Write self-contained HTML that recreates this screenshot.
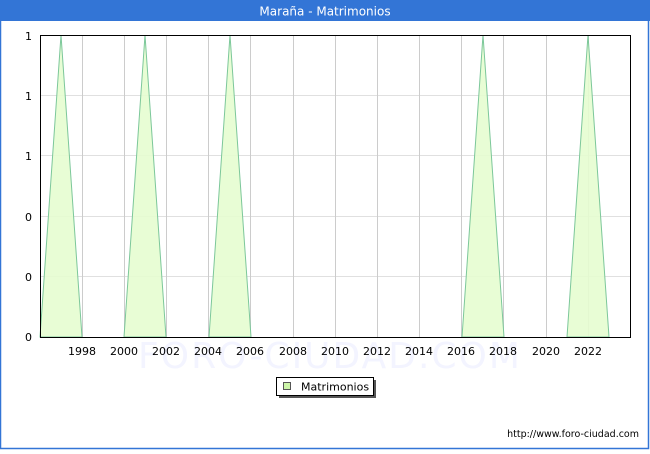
<!DOCTYPE html>
<html><head><meta charset="utf-8"><style>
html,body{margin:0;padding:0;background:#fff}
body{width:650px;height:450px;overflow:hidden;font-family:"DejaVu Sans","Liberation Sans",sans-serif}
</style></head><body>
<svg width="650" height="450" xmlns="http://www.w3.org/2000/svg" font-family="DejaVu Sans, Liberation Sans, sans-serif">
<rect x="0" y="0" width="650" height="450" fill="#fff"/>
<rect x="0.5" y="0.5" width="648" height="448" fill="none" stroke="#3375d6" stroke-width="1.5"/>
<rect x="0" y="0" width="650" height="21" fill="#3375d6"/>
<text x="325" y="15.5" fill="#fff" font-size="12" text-anchor="middle">Maraña - Matrimonios</text>
<text x="330" y="368" fill="#f3f4ff" font-size="36" text-anchor="middle" letter-spacing="2">FORO-CIUDAD.COM</text>
<g stroke="#e0e0e0" stroke-width="1">
<line x1="40" y1="95.5" x2="630" y2="95.5"/><line x1="40" y1="155.5" x2="630" y2="155.5"/>
<line x1="40" y1="216.5" x2="630" y2="216.5"/><line x1="40" y1="276.5" x2="630" y2="276.5"/>
</g>
<g stroke="#cccccc" stroke-width="1">
<line x1="82.5" y1="35" x2="82.5" y2="337"/><line x1="124.5" y1="35" x2="124.5" y2="337"/>
<line x1="166.5" y1="35" x2="166.5" y2="337"/><line x1="208.5" y1="35" x2="208.5" y2="337"/>
<line x1="250.5" y1="35" x2="250.5" y2="337"/><line x1="293.5" y1="35" x2="293.5" y2="337"/>
<line x1="335.5" y1="35" x2="335.5" y2="337"/><line x1="377.5" y1="35" x2="377.5" y2="337"/>
<line x1="419.5" y1="35" x2="419.5" y2="337"/><line x1="461.5" y1="35" x2="461.5" y2="337"/>
<line x1="503.5" y1="35" x2="503.5" y2="337"/><line x1="546.5" y1="35" x2="546.5" y2="337"/>
<line x1="588.5" y1="35" x2="588.5" y2="337"/>
</g>
<g fill="#e5fdd0" fill-opacity="0.9" stroke="#7cc79a" stroke-width="1">
<polygon points="40,337 61,35 82,337"/>
<polygon points="124,337 145,35 166,337"/>
<polygon points="209,337 230,35 251,337"/>
<polygon points="462,337 483,35 504,337"/>
<polygon points="567,337 588,35 609,337"/>
</g>
<rect x="40.5" y="35.5" width="590" height="302" fill="none" stroke="#000" stroke-width="1"/>
<g font-size="11" fill="#000" text-anchor="end">
<text x="32" y="40">1</text><text x="32" y="100">1</text><text x="32" y="160">1</text>
<text x="32" y="221">0</text><text x="32" y="281">0</text><text x="32" y="341">0</text>
</g>
<g font-size="11" fill="#000" text-anchor="middle">
<text x="82" y="355">1998</text><text x="124" y="355">2000</text><text x="166" y="355">2002</text>
<text x="208" y="355">2004</text><text x="250" y="355">2006</text><text x="293" y="355">2008</text>
<text x="335" y="355">2010</text><text x="377" y="355">2012</text><text x="419" y="355">2014</text>
<text x="461" y="355">2016</text><text x="503" y="355">2018</text><text x="546" y="355">2020</text>
<text x="588" y="355">2022</text>
</g>
<rect x="279" y="380" width="97" height="18" fill="#555"/>
<rect x="276.5" y="377.5" width="97" height="18" fill="#fff" stroke="#000"/>
<rect x="283.5" y="382.5" width="7" height="7" fill="#ccf5a8" stroke="#555"/>
<text x="301" y="390.5" font-size="11">Matrimonios</text>
<text x="639" y="437" font-size="9.5" text-anchor="end">http://www.foro-ciudad.com</text>
</svg>
</body></html>
